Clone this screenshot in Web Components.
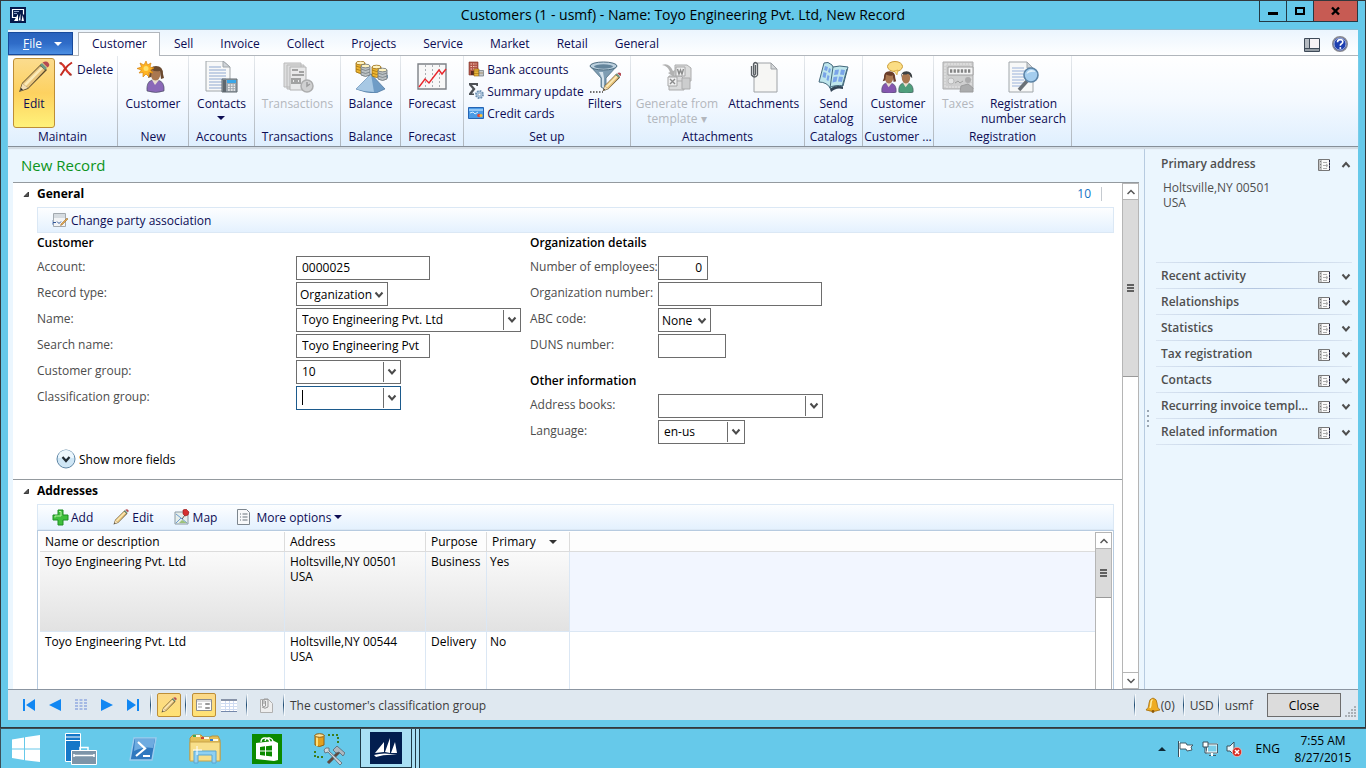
<!DOCTYPE html>
<html lang="en">
<head>
<meta charset="utf-8">
<title>Customers</title>
<style>
  html, body { height: 100%; }
  body {
    margin: 0;
    overflow: hidden;
    background: #66c9ea;
    font: 12px/15px "Open Sans", "Noto Sans", sans-serif;
    color: #000;
  }
</style>
</head>
<body>
<customers-desktop></customers-desktop>

<script>
(function initCustomersForm() {
  const RESET = `
    * { box-sizing: border-box; }
    button, input, select { font: inherit; color: inherit; margin: 0; }
    button { border: 0; background: none; padding: 0; white-space: nowrap; }
    a { color: inherit; text-decoration: none; }
  `;

  function define(name, render) {
    customElements.define(name, class extends HTMLElement {
      constructor() {
        super();
        this.attachShadow({ mode: "open" });
      }
      connectedCallback() {
        this.shadowRoot.innerHTML = `<style>${RESET}</style>` + render(this);
      }
    });
  }

  /* ---------- icons: [width, height, markup] ---------- */
  const PENCIL = `<path d="M1 31l3-9L23 3l6 6L10 28z" fill="#5b4a2c"/><path d="M4.500 22.500L22 5l5 4L10 27z" fill="#e9c57c"/><path d="M6 23L23 6l2 1.500L8 25z" fill="#fbeab8"/><path d="M2 30l2.500-7.500L10 27z" fill="#f4dfb6"/><path d="M2 30l1-3 2 1.500z" fill="#222"/><path d="M22 4l5 5 2-2-5-5z" fill="#6f9a86"/><path d="M24.500 1.500l5 5q3-2 1-4.500t-6-.5z" fill="#b44a52"/>`;
  const PERSON = (x, body, hair, long) => `<g transform="translate(${x} 0)"><path d="M1 30q-1-9 5-11h6q7 2 6 11-8 3-17 0z" fill="${body}" stroke="#3f4a55" stroke-width=".6"/><path d="M6 19l3 5 4-5z" fill="#e9dfd0"/><ellipse cx="9.500" cy="13" rx="5" ry="6.500" fill="#a97750"/><path d="M3.500 13Q3 5 10 5t7 8${long ? "l1 4-3 1-1-8q-5 1-8-1l-1 7-3 1z" : "l-2-1q-1-3-3-4-4 2-7 0z"}" fill="${hair}"/></g>`;
  const COIN = (x, y, c, d) => `<path d="M${x} ${y}v9q4.500 3 9 0v-9z" fill="${c}" stroke="${d}" stroke-width=".8"/><ellipse cx="${x + 4.5}" cy="${y}" rx="4.500" ry="1.800" fill="#fff3c0" stroke="${d}" stroke-width=".8"/><path d="M${x} ${y + 3}q4.500 3 9 0M${x} ${y + 6}q4.500 3 9 0" fill="none" stroke="${d}" stroke-width=".7"/>`;

  const ICONS = {
    app: [16, 16, `<path d="M0 0h16v16H0z" fill="#04184a"/><path d="M6 10.500H2.500v-8h11v5" fill="none" stroke="#fff" stroke-width="1.200"/><path d="M4 14l4-7v7zM8.500 13.500l2-7v7zM11.500 14l1.200-6 1.300 6z" fill="#fff"/><path d="M4 4h5v1H4zM4 6h3v1H4z" fill="#8da0c8"/>`],
    panes: [16, 14, `<path d="M.5.500h15v13H.5z" fill="#f6f2f5" stroke="#3e4a58"/><path d="M1 1h4v12H1z" fill="#b4bac1"/><path d="M1 10h14v3H1z" fill="#949ca4"/><path d="M5.500 1v9M1 10.500h14" stroke="#3e4a58"/>`],
    help: [16, 16, `<circle cx="8" cy="8" r="7.300" fill="#1d3fb0" stroke="#8a8a90" stroke-width="1.400"/><circle cx="8" cy="8" r="6" fill="none" stroke="#c7cede" stroke-width=".8"/><path d="M5.500 6.200q0-2.600 2.700-2.600 2.600 0 2.600 2.200 0 1.200-1.300 1.900-1.200.6-1.200 2" fill="none" stroke="#fff" stroke-width="1.600"/><circle cx="8.300" cy="12" r="1" fill="#fff"/>`],
    edit: [32, 32, PENCIL],
    remove: [16, 16, `<path d="M2 2q3 1 5 5t6 7" fill="none" stroke="#d8352a" stroke-width="2.200"/><path d="M14 1.500q-5 3-7.500 7T2.500 14.500" fill="none" stroke="#c22a20" stroke-width="2"/><path d="M1 2h3M11 13.500l3 .5" stroke="#8f3a32" stroke-width="1.200"/>`],
    customer: [32, 32, PERSON(9, "#8a68b8", "#6a4a30", true) + `<path d="M9 0l1.500 4L14 2l-1 4 4 1-3.500 2L16 12l-4-.5L12 16l-3-3-3 3v-4.500l-4 .5 2.500-3L0 7.500 4.500 6 3 2l4 2z" fill="#ffb524" stroke="#d88512" stroke-width=".7"/><circle cx="9" cy="7.500" r="2.500" fill="#ffe06a"/>`],
    contacts: [34, 32, `<path d="M2 0h17l7 6v24H2z" fill="#f7f8f8" stroke="#a0a6aa"/><path d="M19 0v6h7z" fill="#cfd4d8" stroke="#a0a6aa"/><path d="M5 6h12M5 9h17M5 12h17M5 15h17M5 18h17M5 21h13M5 24h13M5 27h13" stroke="#8fa8d0"/><path d="M18 18h15v13H18z" fill="#9da6ad" stroke="#5f686f"/><path d="M19 19h3v12h-3z" fill="#5f686f"/><path d="M23 19h9v3h-9z" fill="#3ba7e8"/><path d="M24 24h7M24 26.500h7M24 29h7" stroke="#f4f4f4" stroke-width="1.500" stroke-dasharray="1.800 1"/>`],
    transactions: [32, 32, `<path d="M2 2h17v24H2zM5 4h17v24H5z" fill="#d6d6d6" stroke="#aaa"/><path d="M8 6h16v23H8z" fill="#e4e4e4" stroke="#a2a2a2"/><path d="M10 9h6M17 11h5M10 14h12M10 18h3v4h-3zM15 18h3v4h-3z" stroke="#8c8c8c" stroke-width="2" fill="none"/><circle cx="25" cy="25" r="6" fill="#c6c6c6" stroke="#9a9a9a" stroke-width="1.500"/><path d="M25 21v4l3-2" fill="none" stroke="#858585" stroke-width="1.500"/>`],
    balance: [34, 32, `<path d="M2 9q14 5 32 5v3q-8 1-16-2-12 0-16-6z" fill="#7da3c4"/><path d="M17 13L2 28q10 4 20 4l9-4z" fill="#6f9cc6" stroke="#47719b" stroke-width=".7"/><path d="M17 13L2 28q9 3 18 3z" fill="#a7c8e4"/>` + COIN(2, 2, "#eeb52f", "#9a6c10") + COIN(7, 5, "#b9bfc2", "#6c7478") + COIN(18, 6, "#eeb52f", "#9a6c10") + COIN(24, 9, "#b9bfc2", "#6c7478")],
    forecast: [30, 32, `<path d="M1 3h28v25H1z" fill="#f8f8f8" stroke="#7d8187" stroke-width="1.400"/><path d="M8.500 4v23M15.500 4v23M22.500 4v23" stroke="#a9adb2" stroke-dasharray="2 2"/><path d="M2 26l6-8 4 4 10-13 3 4 4-5" fill="none" stroke="#e8262c" stroke-width="1.400"/>`],
    bank: [16, 16, `<path d="M1 1h9v13H1z" fill="#b2564a" stroke="#803528" stroke-width=".6"/><path d="M2.500 3h6M2.500 5.500h6M2.500 8h6" stroke="#f4c9b8" stroke-width="1.200" stroke-dasharray="1.500 1"/><path d="M3 10h3v4H3z" fill="#5b2a22"/><path d="M6 8h5v7H6z" fill="#eab63a" stroke="#8d6210" stroke-width=".6"/><path d="M11 9.500h4.500V15H11z" fill="#c4c8ca" stroke="#6c7478" stroke-width=".7"/><path d="M6 10h5M6 12.500h5M11 12h4" stroke="#8d6210" stroke-width=".5"/>`],
    summary: [16, 16, `<path d="M1 0h9v3H8.500L8 2H4l3.500 4L4 10.500h2V12H1v-1.500L4.500 6 1 2z" fill="#4d5156"/><circle cx="11.500" cy="11.500" r="3.500" fill="#b7cde2" stroke="#6f92b3" stroke-width="2" stroke-dasharray="1.700 1"/><circle cx="11.500" cy="11.500" r="1.300" fill="#fff" stroke="#6f92b3" stroke-width=".6"/>`],
    card: [16, 12, `<path d="M.5.500h15v11H.5z" fill="#4c9be6" stroke="#2464b4"/><path d="M1 3h14" stroke="#a9d4fb" stroke-width="1.500"/><path d="M2 6l3-1 2 2 3-2" stroke="#d9edff" fill="none"/><circle cx="11" cy="8.500" r="1.800" fill="#e2453c"/><circle cx="13" cy="8.500" r="1.500" fill="#f9c234"/>`],
    filters: [32, 32, `<path d="M1 5l11 12v9l5 3V17L28 5z" fill="#7e9db3" stroke="#4d6c80" stroke-width=".8"/><path d="M10 11l3 6v9l2 1V17l-1-6z" fill="#d3e2ec"/><ellipse cx="14.500" cy="5" rx="13.500" ry="4" fill="#bcd0de" stroke="#4d6c80"/><ellipse cx="14.500" cy="5.500" rx="9.500" ry="2.200" fill="#63849b"/><path d="M1 31h13" stroke="#444" stroke-width="1.500" stroke-dasharray="1.500 1.500"/><g transform="translate(13 11) scale(.62)">${PENCIL}</g>`],
    generate: [32, 32, `<path d="M1 4q7-3 11 6l2-1-1 7-6-4 2-1Q7 5 1 4z" fill="#a0a0a0"/><path d="M14 4h12l4 3v13H14zM8 15h12l3 3v11H8z" fill="#d4d4d4" stroke="#999"/><path d="M21 17h8v11h-8z" fill="#c2c2c2" stroke="#999"/><path d="M15 6h9v9h-9zM7 16h9v9H7z" fill="#eee" stroke="#929292"/><path d="M16.500 8l1.500 5 1.500-4 1.500 4 1.500-5M9 18l5 5M14 18l-5 5" fill="none" stroke="#707070" stroke-width="1.400"/>`],
    attachments: [30, 32, `<path d="M5 2h17l6 6v23H5z" fill="#f6f6f4" stroke="#9ea2a6"/><path d="M22 2v6h6z" fill="#d5d8da" stroke="#9ea2a6"/><path d="M6.500 4v9q-1 2-2 0V3q1.500-3 4 0v11q-2.500 4-6 0V5" fill="none" stroke="#5a5f64" stroke-width="1.300"/>`],
    catalog: [32, 32, `<path d="M6 2q4-2 8 2l1 2q6-2 15 0l-5 19q-7-2-12 3-4-7-12-7z" fill="#bfe6ec" stroke="#44687c"/><path d="M15 6l-3 21M11 27q6-4 13-1l5-18" fill="none" stroke="#44687c"/><path d="M7 5l3 1-1 4-3-1zM5.500 11l3 1-1 5-3-1zM11 7l2 1-1 4-2-1zM9.500 14l2 1-1 5-2-1zM17 9l4-.5-1 5-4 .5zM23 8.500l4 .5-1 5-4-.5zM15.500 16l4-.5-1 5-4 1zM21 15.500l4 .5-1 5-4-.5z" fill="#7aa4e8"/><path d="M12 28q6-5 13-2v2q-7-2-12 3z" fill="#345"/>`],
    service: [34, 32, `<g transform="translate(0 6) scale(.84)">${PERSON(0, "#8456ae", "#6a3d2a", true)}</g><g transform="translate(17 6) scale(.84)">${PERSON(0, "#4f9e7c", "#3c4144", false)}</g><ellipse cx="14" cy="5.500" rx="7.500" ry="5" fill="#fbdd84" stroke="#c99a35"/><path d="M13 10l3 4 1-5z" fill="#fbdd84" stroke="#c99a35" stroke-width=".6"/>`],
    taxes: [32, 32, `<path d="M1 1h30v27H1z" fill="#c4c4c4" stroke="#999"/><path d="M3 3h26v23H3z" fill="none" stroke="#e2e2e2" stroke-dasharray="2 1"/><path d="M6 6h25v8H6z" fill="#f2f2f2" stroke="#888"/><path d="M8 10h21" stroke="#666" stroke-width="3.500" stroke-dasharray="2.300 1.300"/><circle cx="9" cy="20" r="3" fill="#e0e0e0" stroke="#aaa"/><path d="M13 22l3-2 2 2 3-2" fill="none" stroke="#888"/><circle cx="26" cy="19" r="3" fill="#999"/><path d="M18 31l1-6 7-2 5 4v4z" fill="#999" stroke="#858585"/>`],
    search: [32, 32, `<path d="M2 1h18l6 6v24H2z" fill="#f7f8f8" stroke="#a0a6aa"/><path d="M20 1v6h6z" fill="#cfd4d8" stroke="#a0a6aa"/><path d="M5 7h12M5 10h17M5 13h17M5 16h17M5 19h12M5 22h12M5 25h9" stroke="#9bb2da"/><path d="M20 20l-8 9" stroke="#6a7076" stroke-width="3.500"/><circle cx="24" cy="14" r="7" fill="#a4cdee" stroke="#5b83a6" stroke-width="1.600"/><path d="M19.500 13q1-4 5-4 3 0 4 2-5-1-9 2z" fill="#e3f2fc"/>`],
    party: [16, 16, `<path d="M1.500 1.500h12v13h-12z" fill="#f2f4f6" stroke="#a2a9af"/><path d="M2 2h11v4H2z" fill="#d5dbe0"/><path d="M1 10.500h3M5 9.500l2 2 2-2" fill="none" stroke="#2f5597"/><path d="M9 12l6-6 1 1-6 6-1.500.5z" fill="#e4a84b" stroke="#93642a" stroke-width=".5"/><path d="M0 8v4h2" fill="none" stroke="#7b95c2"/>`],
    add: [17, 17, `<path d="M6 1h5v5h5v5h-5v5H6v-5H1V6h5z" fill="#3fbf3c" stroke="#1f8f22"/><path d="M7 2.500h2V7H3v1.500" fill="none" stroke="#b4f0a0"/>`],
    pencil: [16, 16, `<g transform="scale(.5)">${PENCIL}</g>`],
    map: [16, 16, `<path d="M1 3h13v12H1z" fill="#e6eeea" stroke="#8b9aa4"/><path d="M2 5l5 4-5 5M7 9l6 5" fill="none" stroke="#6a9ad0"/><path d="M8 11l5 3H5z" fill="#9cc27a"/><path d="M8 10l3-4" stroke="#555"/><path d="M9 1l3-1 3 3-1 3-3 1-2-2z" fill="#d52f2f" stroke="#8f1717" stroke-width=".6"/>`],
    list: [13, 16, `<path d="M.5.500h9l3 3v12H.5z" fill="#f8f9fa" stroke="#7d868e"/><path d="M3 5h1M3 8h1M3 11h1M5.500 5h5M5.500 8h5M5.500 11h5" stroke="#68727a"/>`],
    more: [20, 20, `<circle cx="10" cy="10" r="9" fill="#cfe6f5" stroke="#5f86a5"/><path d="M2 9a8 8 0 0116 0z" fill="#edf7fd"/><path d="M6.500 8l3.500 4 3.500-4" fill="none" stroke="#222b33" stroke-width="2.200"/>`],
    down: [8, 4, `<path d="M0 0h8L4 4z" fill="currentColor"/>`],
    up: [8, 4, `<path d="M0 4h8L4 0z" fill="currentColor"/>`],
    chevron: [10, 8, `<path d="M1.500 1.500l3.500 4 3.500-4" fill="none" stroke="currentColor" stroke-width="2"/>`],
    chevronUp: [10, 8, `<path d="M1.500 6l3.500-4 3.500 4" fill="none" stroke="currentColor" stroke-width="2"/>`],
    thinDown: [8, 6, `<path d="M.5 1L4 4.500 7.500 1" fill="none" stroke="#555" stroke-width="1.500"/>`],
    thinUp: [8, 6, `<path d="M.5 5L4 1.500 7.500 5" fill="none" stroke="#555" stroke-width="1.500"/>`],
    corner: [8, 8, `<path d="M6.500 2v4.500H2z" fill="#555" stroke="#222" stroke-width=".8"/>`],
    form: [12, 12, `<path d="M.5.500h11v11H.5z" fill="#fafafa" stroke="#777"/><path d="M1 1h3v10H1z" fill="#c3c3c3"/><path d="M2.500 2v8" stroke="#777" stroke-dasharray="1 2"/><path d="M5 3.500h4M5 9.500h4M5 6.500h4M8 5l2 1.500L8 8" fill="none" stroke="#999" stroke-width=".8"/><path d="M11.500 1v10" stroke="#224" stroke-dasharray="2 1"/>`],
    first: [12, 12, `<path d="M0 0h2v12H0zM12 0v12L3 6z" fill="#1187f2"/>`],
    prev: [12, 12, `<path d="M12 0v12L0 6z" fill="#1187f2"/>`],
    next: [12, 12, `<path d="M0 0v12l12-6z" fill="#1187f2"/>`],
    last: [12, 12, `<path d="M10 0h2v12h-2zM0 0v12l9-6z" fill="#1187f2"/>`],
    dots: [12, 12, `<path d="M1.500 0v12M6 0v12M10.500 0v12" stroke="#a5b9e4" stroke-width="3" stroke-dasharray="2 1"/>`],
    formView: [16, 12, `<path d="M.5.500h15v11H.5z" fill="#fdfdfd" stroke="#8c8c8c"/><path d="M1 2h14" stroke="#bbb"/><path d="M2 5h4M2 8h4M9.500 4.500h4v1h-4zM9.500 8.500h4v1h-4z" fill="none" stroke="#999"/>`],
    gridView: [16, 13, `<path d="M0 0h16v12H0z" fill="#fff"/><path d="M0 1h16" stroke="#8793a8" stroke-width="2"/><path d="M0 4.500h16M0 7.500h16M0 10.500h16M4.500 2v10M8.500 2v10M12.500 2v10" stroke="#cfdcf2"/><path d="M0 12.500h16" stroke="#7488aa"/>`],
    clip: [14, 15, `<path d="M1.500 1.500h8l4 4v9h-12z" fill="#eee" stroke="#b0b0b0"/><path d="M3.500 2v6q1.500 2 3 0V3M5 6V1h4v8q-3 2.500-6 0" fill="none" stroke="#999"/>`],
    bell: [16, 16, `<path d="M1 13q3-2 3-7 0-4 4-5 4 1 4 5 0 5 3 7-7 3-14 0z" fill="#eeac22" stroke="#9c6508" stroke-width=".7"/><path d="M5 11q1-2 1-5 0-2.500 1.500-3.500" fill="none" stroke="#fff0a8" stroke-width="1.500"/><circle cx="8" cy="14.500" r="1.400" fill="#8d5a08"/>`],
    grip: [12, 12, `<path d="M9 1h2M9 4h2M6 4h2M9 7h2M6 7h2M3 7h2M9 10h2M6 10h2M3 10h2M0 10h2" stroke="#a9afb5" stroke-width="2"/>`],
    start: [28, 28, `<path d="M0 4.500l12-2v11H0zM13 2.300L28 0v13.500H13zM0 14.500h12v10.600L0 23zM13 14.500h15V27l-15-1.800z" fill="#fff"/>`],
    server: [32, 32, `<path d="M.5.500h15v28H.5z" fill="#1577c8" stroke="#fff"/><path d="M1 4h14M1 7.500h14" stroke="#fff"/><path d="M6.500 17.500h25v14h-25z" fill="#7d94a8" stroke="#fff"/><path d="M15 17v-2.500h8V17" fill="none" stroke="#fff" stroke-width="1.500"/><path d="M9 22.500h20M9 21v3M29 21v3" stroke="#fff" stroke-width="1.500"/>`],
    shell: [28, 24, `<path d="M5 1h22l-4 22H1z" fill="#2f78bf" stroke="#9ccbee" stroke-width="1.400"/><path d="M6 2h20l-2 9q-9-2-19 3z" fill="#6eabe0"/><path d="M9 5l7 6.500L7 19M14 19h7" fill="none" stroke="#fff" stroke-width="2.200"/>`],
    folder: [32, 30, `<path d="M1 4l3-3h8l2 2h7l2-1h6l2 4v20H1z" fill="#e4c059" stroke="#b8923a"/><path d="M4 2h7M12 4h8M21 6h8" stroke="#fffbe6" stroke-width="2"/><path d="M4 2h3" stroke="#3aa757" stroke-width="2"/><path d="M12 4h3" stroke="#d2432f" stroke-width="2"/><path d="M21 6h3" stroke="#3279d2" stroke-width="2"/><path d="M1 8h30v19H1z" fill="#f8df8a" stroke="#c9a349"/><path d="M5 29V17h22v12h-4v-8H9v8z" fill="#8fd0f2" stroke="#5aa6d2"/><path d="M8 12v9M4 16h9" stroke="#fff"/>`],
    store: [30, 30, `<path d="M0 0h30v30H0z" fill="#0b8a00"/><path d="M4 9l18-2 4 2v17l-4 1L4 25z" fill="#fff"/><path d="M9 8q0-4 4-4t5 4M13 7q1-4 5-3 3 1 3 4" fill="none" stroke="#fff" stroke-width="1.300"/><path d="M8 13l5-.7v4.200H8zM14 12.200l6-.8v5.100h-6zM8 17.500h5v4.200L8 21zM14 17.500h6v5.100l-6-.8z" fill="#0b8a00"/>`],
    tools: [32, 32, `<path d="M2 2v10q4.500 3 9 0V2z" fill="#e3a01c" stroke="#906010"/><path d="M4 3v10" stroke="#ffe07a" stroke-width="2"/><ellipse cx="6.500" cy="2.500" rx="4.500" ry="1.800" fill="#ffe69a" stroke="#906010"/><path d="M15 2h10v9M2 18v6h10" fill="none" stroke="#3d7d1c" stroke-width="2" stroke-dasharray="2 2"/><path d="M27 18L15 30" stroke="#5f4a40" stroke-width="3"/><path d="M11 17q1-3 5-2v3l13 12-2 2-12-13-3 1z" fill="#cfd6dc" stroke="#59646e" stroke-width=".8"/><path d="M20 17l4-4 8 7-2 3-4-4-3 1z" fill="#aeb8c0" stroke="#59646e" stroke-width=".8"/>`],
    dynamics: [32, 32, `<path d="M0 0h32v32H0z" fill="#021e4f"/><path d="M5 21l9-11v10zM15 20l5-14v15zM21 21l4-11 2 11z" fill="#fff"/><path d="M4 23q10-3 23 0-12-1-21 2z" fill="#fff"/>`],
    flag: [16, 16, `<path d="M1 .5v15.500" stroke="#fff" stroke-width="2"/><path d="M2 2h6l1 2h6l-2 2 1 3-5 1-1-2H2z" fill="#fff" stroke="#38505c" stroke-width=".9"/><path d="M.5 0v16" stroke="#38505c"/>`],
    network: [16, 16, `<path d="M5 3.500h10.500v8H5z" fill="#7bcfe9" stroke="#fff" stroke-width="2"/><path d="M4.500 3h11v9h-11zM7 14.500h7" fill="none" stroke="#38505c" stroke-width=".9"/><path d="M10 12v3" stroke="#fff" stroke-width="2"/><path d="M1 1h5v5H1zM3 6v6h2" fill="#fff" stroke="#38505c"/>`],
    volume: [16, 16, `<path d="M1 5h3l4-4v13l-4-4H1z" fill="#e9f6fb" stroke="#38505c"/><circle cx="11" cy="11" r="4.700" fill="#d82c22" stroke="#f4d0cc" stroke-width=".7"/><path d="M9 9l4 4M13 9l-4 4" stroke="#fff" stroke-width="1.500"/>`],
    minimize: [10, 10, `<path d="M0 6h10v3H0z"/>`],
    maximize: [10, 10, `<path d="M1 2h8v6H1z" fill="none" stroke="#000" stroke-width="2"/>`],
    close: [10, 10, `<path d="M1 1.500l7 7M8 1.500l-7 7" stroke="#000" stroke-width="2.400"/>`]
  };

  define("app-icon", el => {
    const [w, h, body] = ICONS[el.getAttribute("name")];
    return `<style>:host { display: block; flex: none; } svg { display: block; }</style>
      <svg width="${w}" height="${h}" viewBox="0 0 ${w} ${h}" aria-hidden="true">${body}</svg>`;
  });

  /* ---------- title bar and tabs ---------- */
  define("title-bar", () => `<style>
      :host { display: flex; justify-content: space-between; align-items: center; height: 28px; }
      h1 { flex: 1; margin: 0; text-align: center; font-size: 14px; font-weight: 400; line-height: 20px; }
      .logo, .controls { display: flex; width: 99px; }
      .logo { padding-left: 2px; }
      .controls { align-self: flex-start; height: 21px; }
      button { display: grid; place-items: center; width: 27px; border: 1px solid #233944; border-top: 0; border-right: 0; }
      .close { flex: 1; background: #c75b53; border-right: 1px solid #233944; }
    </style>
    <div class="logo"><app-icon name="app"></app-icon></div>
    <h1><slot></slot></h1>
    <div class="controls">
      <button aria-label="Minimize"><app-icon name="minimize"></app-icon></button>
      <button aria-label="Maximize"><app-icon name="maximize"></app-icon></button>
      <button class="close" aria-label="Close window"><app-icon name="close"></app-icon></button>
    </div>`);

  define("ribbon-tabs", () => `<style>
      :host { display: block; background: linear-gradient(#ebf5fe, #fff); border-top: 1px solid #86bcd2; color: #0c0c54; }
      nav { display: flex; align-items: flex-end; height: 26px; box-shadow: inset 0 -1px #b1b6bc; }
      .file { display: flex; align-items: center; gap: 12px; width: 65px; height: 23px; margin: 0 5px 1px 0; padding-left: 14px; background: linear-gradient(#2862bd, #2f6cc8 50%, #4c8fe2); border: 1px solid #174a9c; color: #fff; }
      .tab { height: 24px; padding: 3px 12px 0 13px; border: 1px solid transparent; border-bottom: 0; }
      .tab.active { background: #fff; border-color: #b1b6bc; }
      .spacer { flex: 1; }
      .tool { margin: 0 10px 4px 2px; }
    </style>
    <nav>
      <button class="file"><span><u>F</u>ile</span><app-icon name="down"></app-icon></button>
      <a href="#" class="tab active">Customer</a><a href="#" class="tab">Sell</a><a href="#" class="tab">Invoice</a><a href="#" class="tab">Collect</a><a href="#" class="tab">Projects</a><a href="#" class="tab">Service</a><a href="#" class="tab">Market</a><a href="#" class="tab">Retail</a><a href="#" class="tab">General</a>
      <span class="spacer"></span>
      <button class="tool" aria-label="Layout"><app-icon name="panes"></app-icon></button>
      <button class="tool" aria-label="Help"><app-icon name="help"></app-icon></button>
    </nav>`);

  /* ---------- ribbon ---------- */
  define("ribbon-bar", () => `<style>
      :host { display: flex; height: 91px; background: linear-gradient(#fff, #f4f9ff 50%, #dfeffe); border-bottom: 1px solid #868f98; box-shadow: 0 2px 1px #d3dce4; position: relative; color: #0c0c54; }
    </style><slot></slot>`);

  define("ribbon-group", el => `<style>
      :host { display: flex; flex-direction: column; flex: none; padding-top: 2px; border-right: 1px solid; border-image: linear-gradient(#e6eaee, #aeb6be) 1; }
      .items { display: flex; justify-content: center; align-items: flex-start; height: 70px; }
      footer { text-align: center; line-height: 18px; white-space: nowrap; }
      :host([start]) .items { justify-content: flex-start; padding-left: 5px; }
      :host([gap]) .items { gap: 6px; }
    </style><div class="items"><slot></slot></div><footer>${el.getAttribute("label")}</footer>`);

  define("ribbon-button", el => `<style>
      :host { display: block; }
      button { display: flex; flex-direction: column; align-items: center; gap: 3px; min-width: 42px; height: 70px; padding: 2px 1px 0; border: 1px solid transparent; border-radius: 3px; }
      .icon { height: 32px; }
      .arrow { margin-top: 2px; }
      :host([pressed]) button { background: linear-gradient(#fbdc8e, #fdd160 50%, #fff27a); border-color: #bd8e37; }
      :host([disabled]) button { color: #b3b7bd; }
      :host([disabled]) .icon { opacity: .8; }
    </style>
    <button ${el.hasAttribute("disabled") ? "disabled" : ""}>
      <app-icon class="icon" name="${el.getAttribute("icon")}"></app-icon>
      <span><slot></slot></span>
      ${el.hasAttribute("menu") ? `<app-icon class="arrow" name="down"></app-icon>` : ""}
    </button>`);

  define("small-button", el => `<style>
      :host { display: block; }
      button { display: flex; align-items: center; gap: 3px; height: 22px; padding: 0; }
      .icon { width: 16px; }
    </style>
    <button><app-icon class="icon" name="${el.getAttribute("icon")}"></app-icon><span><slot></slot></span>
      ${el.hasAttribute("menu") ? `<app-icon name="down"></app-icon>` : ""}</button>`);

  /* ---------- form pieces ---------- */
  define("scroll-bar", () => `<style>
      :host { display: flex; flex-direction: column; flex: none; width: 17px; background: #fff; border: 1px solid #b5b5b5; border-top: 0; border-bottom: 0; }
      button { display: grid; place-items: center; flex: none; height: 17px; border: 1px solid #b5b5b5; border-width: 1px 0; background: #fff; }
      .thumb { display: grid; place-content: center; gap: 1px; height: var(--thumb); background: #dadada; border-bottom: 1px solid #999; }
      .thumb i { width: 7px; height: 2px; background: #606060; }
      .track { flex: 1; }
    </style>
    <button aria-label="Scroll up"><app-icon name="thinUp"></app-icon></button>
    <div class="thumb"><i></i><i></i><i></i></div>
    <div class="track"></div>
    <button aria-label="Scroll down"><app-icon name="thinDown"></app-icon></button>`);

  define("fast-tab", el => `<style>
      :host { display: block; padding: 0 8px 0 24px; }
      header { display: flex; align-items: center; height: 24px; padding-bottom: 2px; margin-left: -15px; }
      h2 { flex: 1; margin: 0 0 0 7px; font-size: 12px; line-height: 20px; font-weight: 700; }
      .summary { color: #1272c4; padding-right: 10px; border-right: 1px solid #c5cad0; margin-right: 12px; line-height: 14px; }
    </style>
    <header><app-icon name="corner"></app-icon><h2>${el.getAttribute("label")}</h2>
    ${el.hasAttribute("summary") ? `<span class="summary">${el.getAttribute("summary")}</span>` : ""}</header>
    <slot></slot>`);

  define("action-strip", () => `<style>
      :host { display: flex; align-items: center; gap: 20px; height: 26px; padding-left: 14px; border: 1px solid #dbe8f5; background: linear-gradient(#fdfeff, #e4f1fe); color: #0c0c54; }
    </style><slot></slot>`);

  define("form-field", el => {
    const kind = el.getAttribute("kind") || "text";
    const value = el.getAttribute("value") || "";
    const width = el.getAttribute("width");
    const control = kind === "select"
      ? `<select id="control"><option>${value}</option></select><app-icon class="mark" name="chevron"></app-icon>`
      : `<input id="control" type="text" value="${value}">`;
    return `<style>
      :host { display: grid; grid-template-columns: var(--label-width) 1fr; align-items: center; height: 26px; }
      label { color: #4c4c4c; white-space: nowrap; line-height: 20px; padding-bottom: 2px; }
      .box { display: flex; position: relative; width: ${width}px; height: 24px; border: 1px solid #6d6d6d; background: #fff; }
      :host([focused]) .box { border-color: #1c5a8c; }
      input { flex: 1; min-width: 0; padding: 0 5px 2px; border: 0; outline: 0; background: none; }
      :host([numeric]) input { text-align: right; }
      select { flex: 1; min-width: 0; appearance: none; border: 0; padding: 0 3px; background: none; outline: 0; }
      .mark { position: absolute; right: 3px; top: 8px; color: #4b4b4b; pointer-events: none; }
      .drop { display: grid; place-items: center; width: 17px; margin: 1px 0; border-left: 1px solid #6d6d6d; color: #4b4b4b; }
      .caret { position: absolute; left: 5px; top: 3px; width: 1px; height: 15px; background: #000; }
    </style>
    <label for="control">${el.getAttribute("label")}</label>
    <div class="box">${control}
      ${el.hasAttribute("focused") ? `<i class="caret"></i>` : ""}
      ${kind === "lookup" ? `<button class="drop" aria-label="Open lookup"><app-icon name="chevron"></app-icon></button>` : ""}
    </div>`;
  });

  define("field-group", el => `<style>
      :host { display: block; }
      h3 { margin: 0; font-size: 12px; font-weight: 600; line-height: 20px; padding-bottom: 2px; }
    </style><h3>${el.getAttribute("label")}</h3><slot></slot>`);

  define("general-form", () => `<style>
      :host { display: block; padding-bottom: 8px; }
      .columns { display: grid; grid-template-columns: 493px 1fr; }
      .left { --label-width: 259px; }
      .right { --label-width: 128px; }
      .right field-group + field-group { margin-top: 12px; }
      .more { display: flex; align-items: center; gap: 3px; height: 24px; margin: 2px 0 0 19px; }
    </style>
    <div class="columns">
      <field-group class="left" label="Customer">
        <form-field label="Account:" value="0000025" width="134"></form-field>
        <form-field label="Record type:" kind="select" value="Organization" width="92"></form-field>
        <form-field label="Name:" kind="lookup" value="Toyo Engineering Pvt. Ltd" width="225"></form-field>
        <form-field label="Search name:" value="Toyo Engineering Pvt" width="134"></form-field>
        <form-field label="Customer group:" kind="lookup" value="10" width="105"></form-field>
        <form-field label="Classification group:" kind="lookup" focused width="105"></form-field>
      </field-group>
      <div class="right">
        <field-group label="Organization details">
          <form-field label="Number of employees:" value="0" numeric width="50"></form-field>
          <form-field label="Organization number:" width="164"></form-field>
          <form-field label="ABC code:" kind="select" value="None" width="53"></form-field>
          <form-field label="DUNS number:" width="68"></form-field>
        </field-group>
        <field-group label="Other information">
          <form-field label="Address books:" kind="lookup" width="165"></form-field>
          <form-field label="Language:" kind="lookup" value="en-us" width="87"></form-field>
        </field-group>
      </div>
    </div>
    <button class="more"><app-icon name="more"></app-icon>Show more fields</button>`);

  define("address-grid", () => `<style>
      :host { display: flex; height: 200px; border: 1px solid #b7cbe0; padding: 1px 1px 0 2px; }
      table { flex: 1; align-self: flex-start; table-layout: fixed; border-collapse: separate; border-spacing: 0; }
      th, td { text-align: left; vertical-align: top; font-weight: 400; padding: 0 0 0 5px; white-space: nowrap; border-right: 1px solid #dbe7f4; border-bottom: 1px solid #dbe7f4; }
      th { height: 20px; padding-top: 2px; background: #fdfdfd; border-color: #dcdcdc; }
      td { height: 80px; padding-top: 2px; }
      tr.selected td { background: linear-gradient(#fafafa, #e2e2e2); }
      tr.selected td:last-child { background: #f2f6ff; }
      th:last-child, td:last-child { border-right: 0; }
      td:nth-child(4) { padding-left: 3px; }
      .sort { display: flex; align-items: center; justify-content: space-between; padding-right: 12px; }
      .sort app-icon { color: #333; }
      scroll-bar { --thumb: 49px; }
    </style>
    <table>
      <colgroup><col style="width:245px"><col style="width:141px"><col style="width:61px"><col style="width:83px"><col></colgroup>
      <thead><tr><th>Name or description</th><th>Address</th><th>Purpose</th><th><div class="sort">Primary<app-icon name="down"></app-icon></div></th><th></th></tr></thead>
      <tbody>
        <tr class="selected"><td>Toyo Engineering Pvt. Ltd</td><td>Holtsville,NY 00501<br>USA</td><td>Business</td><td>Yes</td><td></td></tr>
        <tr><td>Toyo Engineering Pvt. Ltd</td><td>Holtsville,NY 00544<br>USA</td><td>Delivery</td><td>No</td><td></td></tr>
      </tbody>
    </table>
    <scroll-bar></scroll-bar>`);

  /* ---------- fact boxes ---------- */
  define("fact-box", el => `<style>
      :host { display: block; color: #4f4f4f; border-bottom: 1px solid; border-image: linear-gradient(90deg, #dbe6f2, #b4c6e0 50%, #dbe6f2) 1; }
      header { display: flex; align-items: center; height: 25px; padding: 0 1px 0 5px; }
      h2 { flex: 1; min-width: 0; margin: 0; font-size: 12px; font-weight: 600; line-height: 20px; white-space: nowrap; }
      button { padding-top: 2px; }
      button + button { margin-left: 11px; }
      .content { height: 86px; padding: 4px 7px; }
    </style>
    <header><h2>${el.getAttribute("label")}</h2>
      <button aria-label="Open"><app-icon name="form"></app-icon></button>
      <button aria-label="Toggle"><app-icon name="${el.hasAttribute("open") ? "chevronUp" : "chevron"}"></app-icon></button>
    </header>
    ${el.hasAttribute("open") ? `<div class="content"><slot></slot></div>` : ""}`);

  /* ---------- status bar ---------- */
  define("status-bar", () => `<style>
      :host { display: flex; align-items: center; height: 31px; flex: none; padding-left: 8px; border-top: 1px solid #8b95a1; background: #dfe8f0; color: #3c3c3c; }
      button { display: grid; place-items: center; width: 26px; height: 24px; }
      .on { width: 24px; border: 1px solid #bd8e37; border-radius: 2px; background: linear-gradient(#fbd98a, #ffe273); }
      i { width: 2px; height: 22px; margin: 0 5px 0 4px; border-right: 1px solid #f4f8fb; background: linear-gradient(#dfe8f0, #1c4a72 50%, #dfe8f0); }
      .text { flex: 1; }
      .bell { display: flex; align-items: center; width: auto; padding: 0 4px; }
      .close { width: 74px; margin: 0 4px 0 14px; border: 1px solid #6d6d6d; background: #dcdcdc; color: #000; }
      .grip { align-self: flex-end; padding-bottom: 2px; margin-right: 1px; }
    </style>
    <button aria-label="First"><app-icon name="first"></app-icon></button>
    <button aria-label="Previous"><app-icon name="prev"></app-icon></button>
    <button aria-label="List"><app-icon name="dots"></app-icon></button>
    <button aria-label="Next"><app-icon name="next"></app-icon></button>
    <button aria-label="Last"><app-icon name="last"></app-icon></button><i></i>
    <button class="on" aria-label="Edit record"><app-icon name="pencil"></app-icon></button><i></i>
    <button class="on" aria-label="Form view"><app-icon name="formView"></app-icon></button>
    <button aria-label="Grid view"><app-icon name="gridView"></app-icon></button><i></i>
    <button aria-label="Documents"><app-icon name="clip"></app-icon></button><i></i>
    <span class="text">The customer's classification group</span><i></i>
    <button class="bell"><app-icon name="bell"></app-icon>(0)</button><i></i>
    <span>USD</span><i></i><span>usmf</span>
    <button class="close">Close</button>
    <app-icon class="grip" name="grip"></app-icon>`);

  /* ---------- taskbar ---------- */
  define("task-bar", () => `<style>
      :host { display: flex; align-items: stretch; height: 40px; flex: none; background: #66c9ea; border-top: 1px solid #3c5059; border-left: 1px solid #3c5059; }
      button { display: grid; place-items: center; width: 62px; }
      .start { width: 49px; }
      .active { width: 52px; background: #a9e0f4; border: 1px solid #1f3a47; border-top: 0; }
      .stack { width: 4px; background: #a9e0f4; border-right: 1px solid #1f3a47; }
      .spacer { flex: 1; }
      .tray { display: flex; align-items: center; gap: 8px; }
      .tray app-icon:first-child { margin-right: 4px; color: #102a36; }
      .lang { margin: 0 12px 0 6px; }
      .clock { align-self: center; width: 62px; margin-right: 12px; text-align: center; line-height: 17px; white-space: nowrap; }
    </style>
    <button class="start" aria-label="Start"><app-icon name="start"></app-icon></button>
    <button aria-label="Server Manager"><app-icon name="server"></app-icon></button>
    <button aria-label="PowerShell"><app-icon name="shell"></app-icon></button>
    <button aria-label="File Explorer"><app-icon name="folder"></app-icon></button>
    <button aria-label="Store"><app-icon name="store"></app-icon></button>
    <button aria-label="Management Studio"><app-icon name="tools"></app-icon></button>
    <button class="active" aria-label="Dynamics AX"><app-icon name="dynamics"></app-icon></button>
    <span class="stack"></span><span class="stack"></span>
    <span class="spacer"></span>
    <div class="tray">
      <app-icon name="up"></app-icon><app-icon name="flag"></app-icon><app-icon name="network"></app-icon><app-icon name="volume"></app-icon>
      <span class="lang">ENG</span>
    </div>
    <div class="clock">7:55 AM<br>8/27/2015</div>`);

  /* ---------- whole screen ---------- */
  define("customers-desktop", () => `<style>
      :host { display: flex; flex-direction: column; height: 100vh; }
      .window { display: flex; flex-direction: column; flex: 1; min-height: 0; padding: 0 7px 7px; border: 1px solid #33383c; background: #66c9ea; }
      .workspace { display: flex; flex: 1; min-height: 0; background: #ebf6fe; }
      main { display: flex; flex-direction: column; flex: 1; min-width: 0; padding: 0 5px; }
      .record { margin: 0; padding: 8px 8px 7px; font-size: 15px; font-weight: 400; line-height: 20px; color: #0c9420; }
      .pane { display: flex; flex: 1; min-height: 0; border-top: 1px solid #949a9f; background: #fff; }
      .scroll { flex: 1; min-width: 0; overflow: hidden; }
      .scroll fast-tab + fast-tab { border-top: 1px solid #949a9f; }
      .pane > scroll-bar { --thumb: 177px; }
      aside { width: 214px; flex: none; display: flex; border-left: 1px solid #b7cbe0; }
      .splitter { display: grid; align-content: center; width: 6px; padding-left: 2px; gap: 3px; }
      .splitter i { width: 2px; height: 2px; background: #9aa6b2; }
      .facts { flex: 1; min-width: 0; padding: 4px 6px 0 5px; }
    </style>
    <div class="window">
      <title-bar>Customers (1 - usmf) - Name: Toyo Engineering Pvt. Ltd, New Record</title-bar>
      <ribbon-tabs></ribbon-tabs>
      <ribbon-bar>
        <ribbon-group label="Maintain" start style="width:110px">
          <ribbon-button icon="edit" pressed>Edit</ribbon-button>
          <small-button icon="remove" style="padding-left:3px">Delete</small-button>
        </ribbon-group>
        <ribbon-group label="New" style="width:71px"><ribbon-button icon="customer">Customer</ribbon-button></ribbon-group>
        <ribbon-group label="Accounts" style="width:66px"><ribbon-button icon="contacts" menu>Contacts</ribbon-button></ribbon-group>
        <ribbon-group label="Transactions" style="width:86px"><ribbon-button icon="transactions" disabled>Transactions</ribbon-button></ribbon-group>
        <ribbon-group label="Balance" style="width:60px"><ribbon-button icon="balance">Balance</ribbon-button></ribbon-group>
        <ribbon-group label="Forecast" style="width:63px"><ribbon-button icon="forecast">Forecast</ribbon-button></ribbon-group>
        <ribbon-group label="Set up" style="width:167px">
          <div>
            <small-button icon="bank">Bank accounts</small-button>
            <small-button icon="summary">Summary update</small-button>
            <small-button icon="card">Credit cards</small-button>
          </div>
          <ribbon-button icon="filters">Filters</ribbon-button>
        </ribbon-group>
        <ribbon-group label="Attachments" gap style="width:174px">
          <ribbon-button icon="generate" disabled>Generate from<br>template &#9662;</ribbon-button>
          <ribbon-button icon="attachments">Attachments</ribbon-button>
        </ribbon-group>
        <ribbon-group label="Catalogs" style="width:58px"><ribbon-button icon="catalog">Send<br>catalog</ribbon-button></ribbon-group>
        <ribbon-group label="Customer ..." style="width:71px"><ribbon-button icon="service">Customer<br>service</ribbon-button></ribbon-group>
        <ribbon-group label="Registration" style="width:138px">
          <ribbon-button icon="taxes" disabled>Taxes</ribbon-button>
          <ribbon-button icon="search">Registration<br>number search</ribbon-button>
        </ribbon-group>
      </ribbon-bar>
      <div class="workspace">
        <main>
          <h2 class="record">New Record</h2>
          <div class="pane">
            <div class="scroll">
              <fast-tab label="General" summary="10">
                <action-strip><small-button icon="party">Change party association</small-button></action-strip>
                <general-form></general-form>
              </fast-tab>
              <fast-tab label="Addresses">
                <action-strip>
                  <small-button icon="add">Add</small-button>
                  <small-button icon="pencil">Edit</small-button>
                  <small-button icon="map">Map</small-button>
                  <small-button icon="list" menu>More options</small-button>
                </action-strip>
                <address-grid></address-grid>
              </fast-tab>
            </div>
            <scroll-bar></scroll-bar>
          </div>
        </main>
        <aside>
          <div class="splitter"><i></i><i></i><i></i><i></i></div>
          <div class="facts">
            <fact-box label="Primary address" open>Holtsville,NY 00501<br>USA</fact-box>
            <fact-box label="Recent activity"></fact-box>
            <fact-box label="Relationships"></fact-box>
            <fact-box label="Statistics"></fact-box>
            <fact-box label="Tax registration"></fact-box>
            <fact-box label="Contacts"></fact-box>
            <fact-box label="Recurring invoice templ..."></fact-box>
            <fact-box label="Related information"></fact-box>
          </div>
        </aside>
      </div>
      <status-bar></status-bar>
    </div>
    <task-bar></task-bar>`);
})();
</script>
</body>
</html>
